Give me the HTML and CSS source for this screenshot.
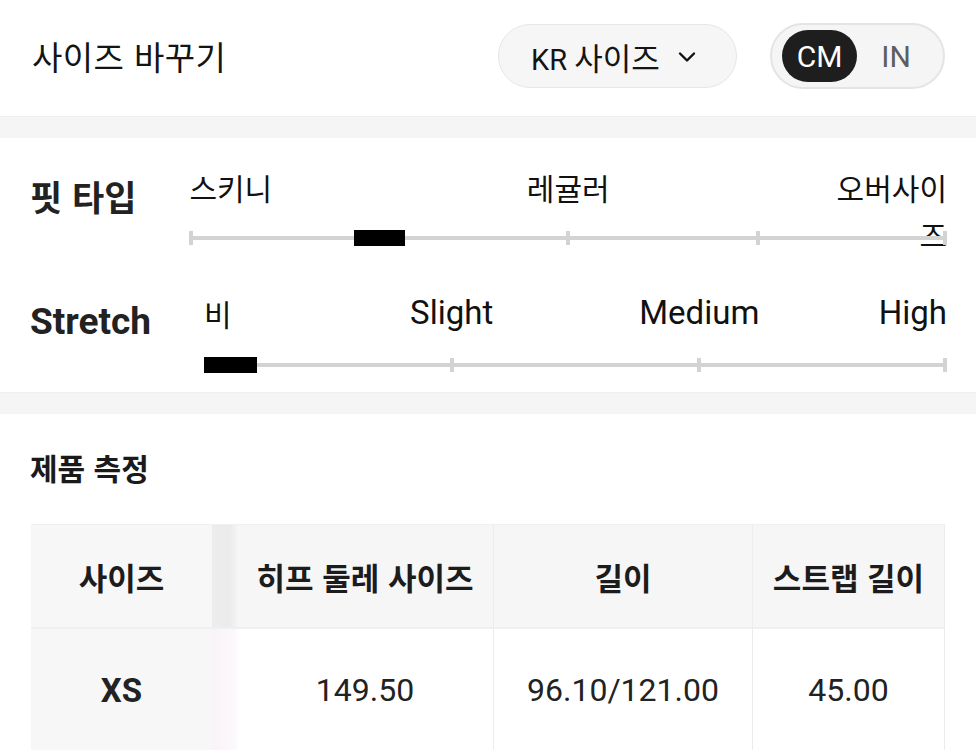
FILE: index.html
```html
<!DOCTYPE html>
<html lang="ko">
<head>
<meta charset="utf-8">
<title>사이즈 바꾸기</title>
<link rel="stylesheet" href="styles.css">
</head>
<body>
<header class="topbar">
  <h1 class="title">사이즈 바꾸기</h1>
  <div class="controls">
    <button class="dropdown"><span class="dd-text">KR <span class="ko">사이즈</span></span>
      <svg class="chev" width="18" height="12" viewBox="0 0 18 12"><path d="M2 2.5 L9 9.5 L16 2.5" fill="none" stroke="#111" stroke-width="2.4" stroke-linecap="round" stroke-linejoin="round"/></svg>
    </button>
    <div class="unit-toggle">
      <span class="unit active">CM</span>
      <span class="unit">IN</span>
    </div>
  </div>
</header>
<div class="band"></div>
<section class="fit">
  <div class="fit-row">
    <div class="row-label ko">핏 타입</div>
    <div class="slider">
      <div class="labels three">
        <span class="lab ko left">스키니</span>
        <span class="lab ko center">레귤러</span>
        <span class="lab ko right narrow">오버사이즈</span>
      </div>
      <div class="track">
        <span class="tick first" style="left:0%"></span>
        <span class="tick" style="left:50%"></span>
        <span class="tick" style="left:75%"></span>
        <span class="tick last" style="left:100%"></span>
        <span class="thumb mid" style="left:25%"></span>
      </div>
    </div>
  </div>
  <div class="fit-row second">
    <div class="row-label">Stretch</div>
    <div class="slider">
      <div class="labels four">
        <span class="lab ko left">비</span>
        <span class="lab center">Slight</span>
        <span class="lab center">Medium</span>
        <span class="lab right">High</span>
      </div>
      <div class="track">
        <span class="tick" style="left:33.333%"></span>
        <span class="tick" style="left:66.666%"></span>
        <span class="tick last" style="left:100%"></span>
        <span class="thumb start" style="left:0%"></span>
      </div>
    </div>
  </div>
</section>
<div class="band"></div>
<section class="measure">
  <h2 class="measure-title">제품 측정</h2>
  <div class="table">
    <div class="cell head sticky">사이즈</div>
    <div class="shade head-shade"></div>
    <div class="cell head">히프 둘레 사이즈</div>
    <div class="cell head">길이</div>
    <div class="cell head">스트랩 길이</div>
    <div class="cell body sticky strong">XS</div>
    <div class="shade body-shade"></div>
    <div class="cell body">149.50</div>
    <div class="cell body">96.10/121.00</div>
    <div class="cell body">45.00</div>
  </div>
</section>
</body>
</html>
```
FILE: styles.css
```css
* { box-sizing: border-box; }
html, body { margin: 0; padding: 0; background: #fff; }
body {
  width: 976px;
  font-family: Roboto, "Noto Sans CJK KR", sans-serif;
  color: #111;
}
.ko { font-family: "Noto Sans CJK KR", sans-serif; }

.topbar {
  height: 116px;
  display: flex;
  align-items: center;
  justify-content: space-between;
  padding: 0 31px 4px 32px;
}
.title {
  margin: 0;
  font-family: "Noto Sans CJK KR", sans-serif;
  font-weight: 400;
  font-size: 33px;
  letter-spacing: 0.4px;
  color: #141414;
}
.controls { display: flex; align-items: center; gap: 33px; }
.dropdown {
  height: 64px;
  width: 239px;
  border-radius: 32px;
  border: 1px solid #e6e6e6;
  background: #f6f6f6;
  display: flex;
  align-items: center;
  padding: 0 0 0 32px;
  gap: 18px;
  font-family: Roboto, "Noto Sans CJK KR", sans-serif;
  font-size: 29px;
  color: #141414;
}
.dd-text .ko { font-size: 31px; }
.chev { margin-top: 2px; }
.unit-toggle {
  height: 66px;
  width: 175px;
  border-radius: 33px;
  border: 2px solid #e4e4e4;
  background: #f5f5f5;
  display: flex;
  align-items: center;
  padding: 0 0 0 10px;
}
.unit {
  width: 75px;
  height: 52px;
  border-radius: 26px;
  display: flex;
  align-items: center;
  justify-content: center;
  font-size: 30px;
  color: #5e5e5e;
}
.unit + .unit { margin-left: 2px; width: 74px; }
.unit.active { background: #1e1e1e; color: #fff; }

.band { height: 22px; background: #f5f5f5; border-top: 1px solid #efefef; }

.fit { padding: 26px 29px 19px 30px; }
.fit-row { display: flex; align-items: center; gap: 53px; }
.fit-row.second { margin-top: 44px; }
.row-label {
  font-size: 37px;
  font-weight: 700;
  color: #222;
  margin-bottom: 20px;
  white-space: nowrap;
}
.row-label.ko { font-size: 35px; }
.slider { flex: 1; }
.labels {
  height: 46px;
  display: grid;
  line-height: 46px;
}
.labels.three { grid-template-columns: 1fr 1fr 1fr; }
.labels.four { grid-template-columns: 1fr 2fr 2fr 1fr; }
.lab { font-size: 33px; color: #111; white-space: nowrap; }
.lab.ko { font-size: 30px; }
.lab.left { text-align: left; }
.lab.center { text-align: center; }
.lab.right { justify-self: end; text-align: right; }
.lab.narrow { white-space: normal; width: 122px; line-height: 47px; }

.track {
  position: relative;
  height: 16px;
  margin-top: 20px;
}
.track::before {
  content: "";
  position: absolute;
  left: 0; right: 0;
  top: 6px;
  height: 4px;
  background: #d3d3d3;
}
.tick {
  position: absolute;
  top: 1px;
  width: 4px;
  height: 14px;
  margin-left: -2px;
  background: #d3d3d3;
}
.tick.first { margin-left: 0; }
.tick.last { margin-left: -4px; }
.thumb {
  position: absolute;
  top: 0;
  height: 16px;
  width: 51px;
  background: #000;
}
.thumb.mid { margin-left: -25px; }
.second .track { margin-top: 21px; }
.second .thumb { width: 53px; }

.measure { padding: 33px 31px 0 31px; }
.measure-title {
  margin: 0 0 37px -1px;
  font-family: "Noto Sans CJK KR", sans-serif;
  font-size: 30px;
  font-weight: 700;
  line-height: 40px;
  color: #1a1a1a;
}
.table {
  display: grid;
  grid-template-columns: 181px 25px 257px 259px 192px;
  grid-template-rows: 104px 122px;
  border-top: 1px solid #f0f0f0;
}
.cell {
  display: flex;
  align-items: center;
  justify-content: center;
  font-size: 32px;
  color: #222;
}
.cell.head {
  background: #f6f6f6;
  font-family: "Noto Sans CJK KR", sans-serif;
  font-weight: 700;
  font-size: 31px;
  color: #1c1c1c;
  border-bottom: 2px solid #efefef;
  border-right: 1px solid #ececec;
}
.cell.body { border-right: 1px solid #ececec; }
.cell.sticky { background: #f7f7f7; border-right: none; }
.cell.strong { font-weight: 700; font-size: 33px; }
.shade.head-shade {
  background: linear-gradient(to right, #ededed 0%, #ebebeb 70%, #f3f3f3 100%);
  border-bottom: 2px solid #efefef;
}
.shade.body-shade {
  background: linear-gradient(to right, #f7f3f7 0%, #fbf7fb 70%, #fdfafd 100%);
}
```
